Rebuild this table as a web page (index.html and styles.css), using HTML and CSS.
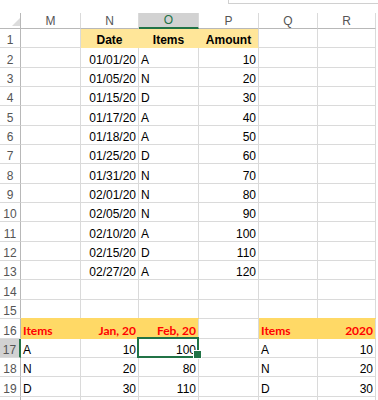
FILE: index.html
```html
<!DOCTYPE html>
<html>
<head>
<meta charset="utf-8">
<link rel="stylesheet" href="styles.css">
</head>
<body>
<div class="app">
  <div class="topbar"><div class="formula"></div></div>
  <div class="sheet">
    <div class="corner"><svg width="8" height="8" viewBox="0 0 8 8"><polygon points="8,0 8,8 0,8" fill="#dcdcdc"/></svg></div>
    <div class="ch">M</div><div class="ch">N</div><div class="ch ch-sel">O</div><div class="ch">P</div><div class="ch">Q</div><div class="ch">R</div>

    <div class="rh">1</div><div class="c"></div><div class="c y1">Date</div><div class="c y1">Items</div><div class="c y1 y1-end">Amount</div><div class="c"></div><div class="c"></div>
    <div class="rh">2</div><div class="c"></div><div class="c num">01/01/20</div><div class="c">A</div><div class="c num">10</div><div class="c"></div><div class="c"></div>
    <div class="rh">3</div><div class="c"></div><div class="c num">01/05/20</div><div class="c">N</div><div class="c num">20</div><div class="c"></div><div class="c"></div>
    <div class="rh">4</div><div class="c"></div><div class="c num">01/15/20</div><div class="c">D</div><div class="c num">30</div><div class="c"></div><div class="c"></div>
    <div class="rh">5</div><div class="c"></div><div class="c num">01/17/20</div><div class="c">A</div><div class="c num">40</div><div class="c"></div><div class="c"></div>
    <div class="rh">6</div><div class="c"></div><div class="c num">01/18/20</div><div class="c">A</div><div class="c num">50</div><div class="c"></div><div class="c"></div>
    <div class="rh">7</div><div class="c"></div><div class="c num">01/25/20</div><div class="c">D</div><div class="c num">60</div><div class="c"></div><div class="c"></div>
    <div class="rh">8</div><div class="c"></div><div class="c num">01/31/20</div><div class="c">N</div><div class="c num">70</div><div class="c"></div><div class="c"></div>
    <div class="rh">9</div><div class="c"></div><div class="c num">02/01/20</div><div class="c">N</div><div class="c num">80</div><div class="c"></div><div class="c"></div>
    <div class="rh">10</div><div class="c"></div><div class="c num">02/05/20</div><div class="c">N</div><div class="c num">90</div><div class="c"></div><div class="c"></div>
    <div class="rh">11</div><div class="c"></div><div class="c num">02/10/20</div><div class="c">A</div><div class="c num">100</div><div class="c"></div><div class="c"></div>
    <div class="rh">12</div><div class="c"></div><div class="c num">02/15/20</div><div class="c">D</div><div class="c num">110</div><div class="c"></div><div class="c"></div>
    <div class="rh">13</div><div class="c"></div><div class="c num">02/27/20</div><div class="c">A</div><div class="c num">120</div><div class="c"></div><div class="c"></div>
    <div class="rh">14</div><div class="c"></div><div class="c"></div><div class="c"></div><div class="c"></div><div class="c"></div><div class="c"></div>
    <div class="rh">15</div><div class="c"></div><div class="c"></div><div class="c"></div><div class="c"></div><div class="c"></div><div class="c"></div>
    <div class="rh">16</div><div class="c y2">Items</div><div class="c y2 num">Jan, 20</div><div class="c y2 num y2-end">Feb, 20</div><div class="c"></div><div class="c y2">Items</div><div class="c y2 num y2-end">2020</div>
    <div class="rh rh-sel">17</div><div class="c">A</div><div class="c num">10</div><div class="c num sel">100</div><div class="c"></div><div class="c">A</div><div class="c num">10</div>
    <div class="rh">18</div><div class="c">N</div><div class="c num">20</div><div class="c num">80</div><div class="c"></div><div class="c">N</div><div class="c num">20</div>
    <div class="rh">19</div><div class="c">D</div><div class="c num">30</div><div class="c num">110</div><div class="c"></div><div class="c">D</div><div class="c num">30</div>
    <div class="rh"></div><div class="c"></div><div class="c"></div><div class="c"></div><div class="c"></div><div class="c"></div><div class="c"></div>
  </div>
</div>
</body>
</html>
```
FILE: styles.css
```css
* { box-sizing: border-box; }
html, body { margin: 0; padding: 0; background: #ffffff; }
body { font-family: "Liberation Sans", Arial, sans-serif; font-size: 12px; color: #000; overflow: hidden; }

.app { width: 378px; height: 400px; overflow: hidden; }

.topbar { height: 13px; display: flex; justify-content: flex-end; }
.formula { width: 150px; height: 4px; border-left: 1px solid #d0d0d0; border-bottom: 1px solid #d0d0d0; background: #fff; }

.sheet {
  display: grid;
  grid-template-columns: 21px 60px 58px 60px 60px 59px 58px;
  grid-template-rows: 16px 19px 20px 19px 19px 20px 19px 19px 20px 19px 19px 20px 19px 19px 20px 19px 20px 19px 19px 20px 20px;
}

.corner {
  border-right: 1px solid #b8b8b8;
  border-bottom: 1px solid #b8b8b8;
  display: flex; justify-content: flex-end; align-items: flex-end;
  padding-bottom: 2px;
}
.corner svg { display: block; }

.ch {
  display: flex; align-items: center; justify-content: center;
  border-right: 1px solid #dadada;
  border-bottom: 1px solid #b8b8b8;
  color: #555;
  line-height: 14px;
}
.ch-sel { background: #d2d2d2; border-bottom: 2px solid #217346; color: #217346; }

.rh {
  display: flex; align-items: flex-end; justify-content: center;
  border-right: 1px solid #b8b8b8;
  border-bottom: 1px solid #dadada;
  color: #555;
  line-height: 14px;
}
.rh-sel { background: #d2d2d2; border-right: 2px solid #217346; }

.c {
  display: flex; align-items: flex-end; justify-content: flex-start;
  padding: 0 2px;
  border-right: 1px solid #dadada;
  border-bottom: 1px solid #dadada;
  line-height: 14px;
  white-space: nowrap;
  overflow: visible;
}
.num { justify-content: flex-end; }

.y1 {
  background: #ffe699;
  border-right-color: #ffe699;
  border-bottom-color: #ffe699;
  font-weight: bold;
  justify-content: center;
}
.y1-end { border-right-color: #dadada; }

.y2 {
  background: #ffd966;
  border-right-color: #ffd966;
  border-bottom-color: #ffd966;
  box-shadow: 0 -1px 0 #ffd966;
  color: #ff0000;
  font-family: Lato, "Liberation Sans", sans-serif;
  font-weight: bold;
  font-size: 12px;
}
.y2-end { border-right-color: #dadada; }

.sel { position: relative; }
.sel::after {
  content: "";
  position: absolute;
  top: -2px; left: -2px; right: -1px; bottom: -1px;
  border: 2px solid #217346;
  pointer-events: none;
}
.sel::before {
  content: "";
  position: absolute;
  right: -4px; bottom: -2px;
  width: 7px; height: 7px;
  background: #217346;
  border: 1px solid #ffffff;
  z-index: 1;
}
```
